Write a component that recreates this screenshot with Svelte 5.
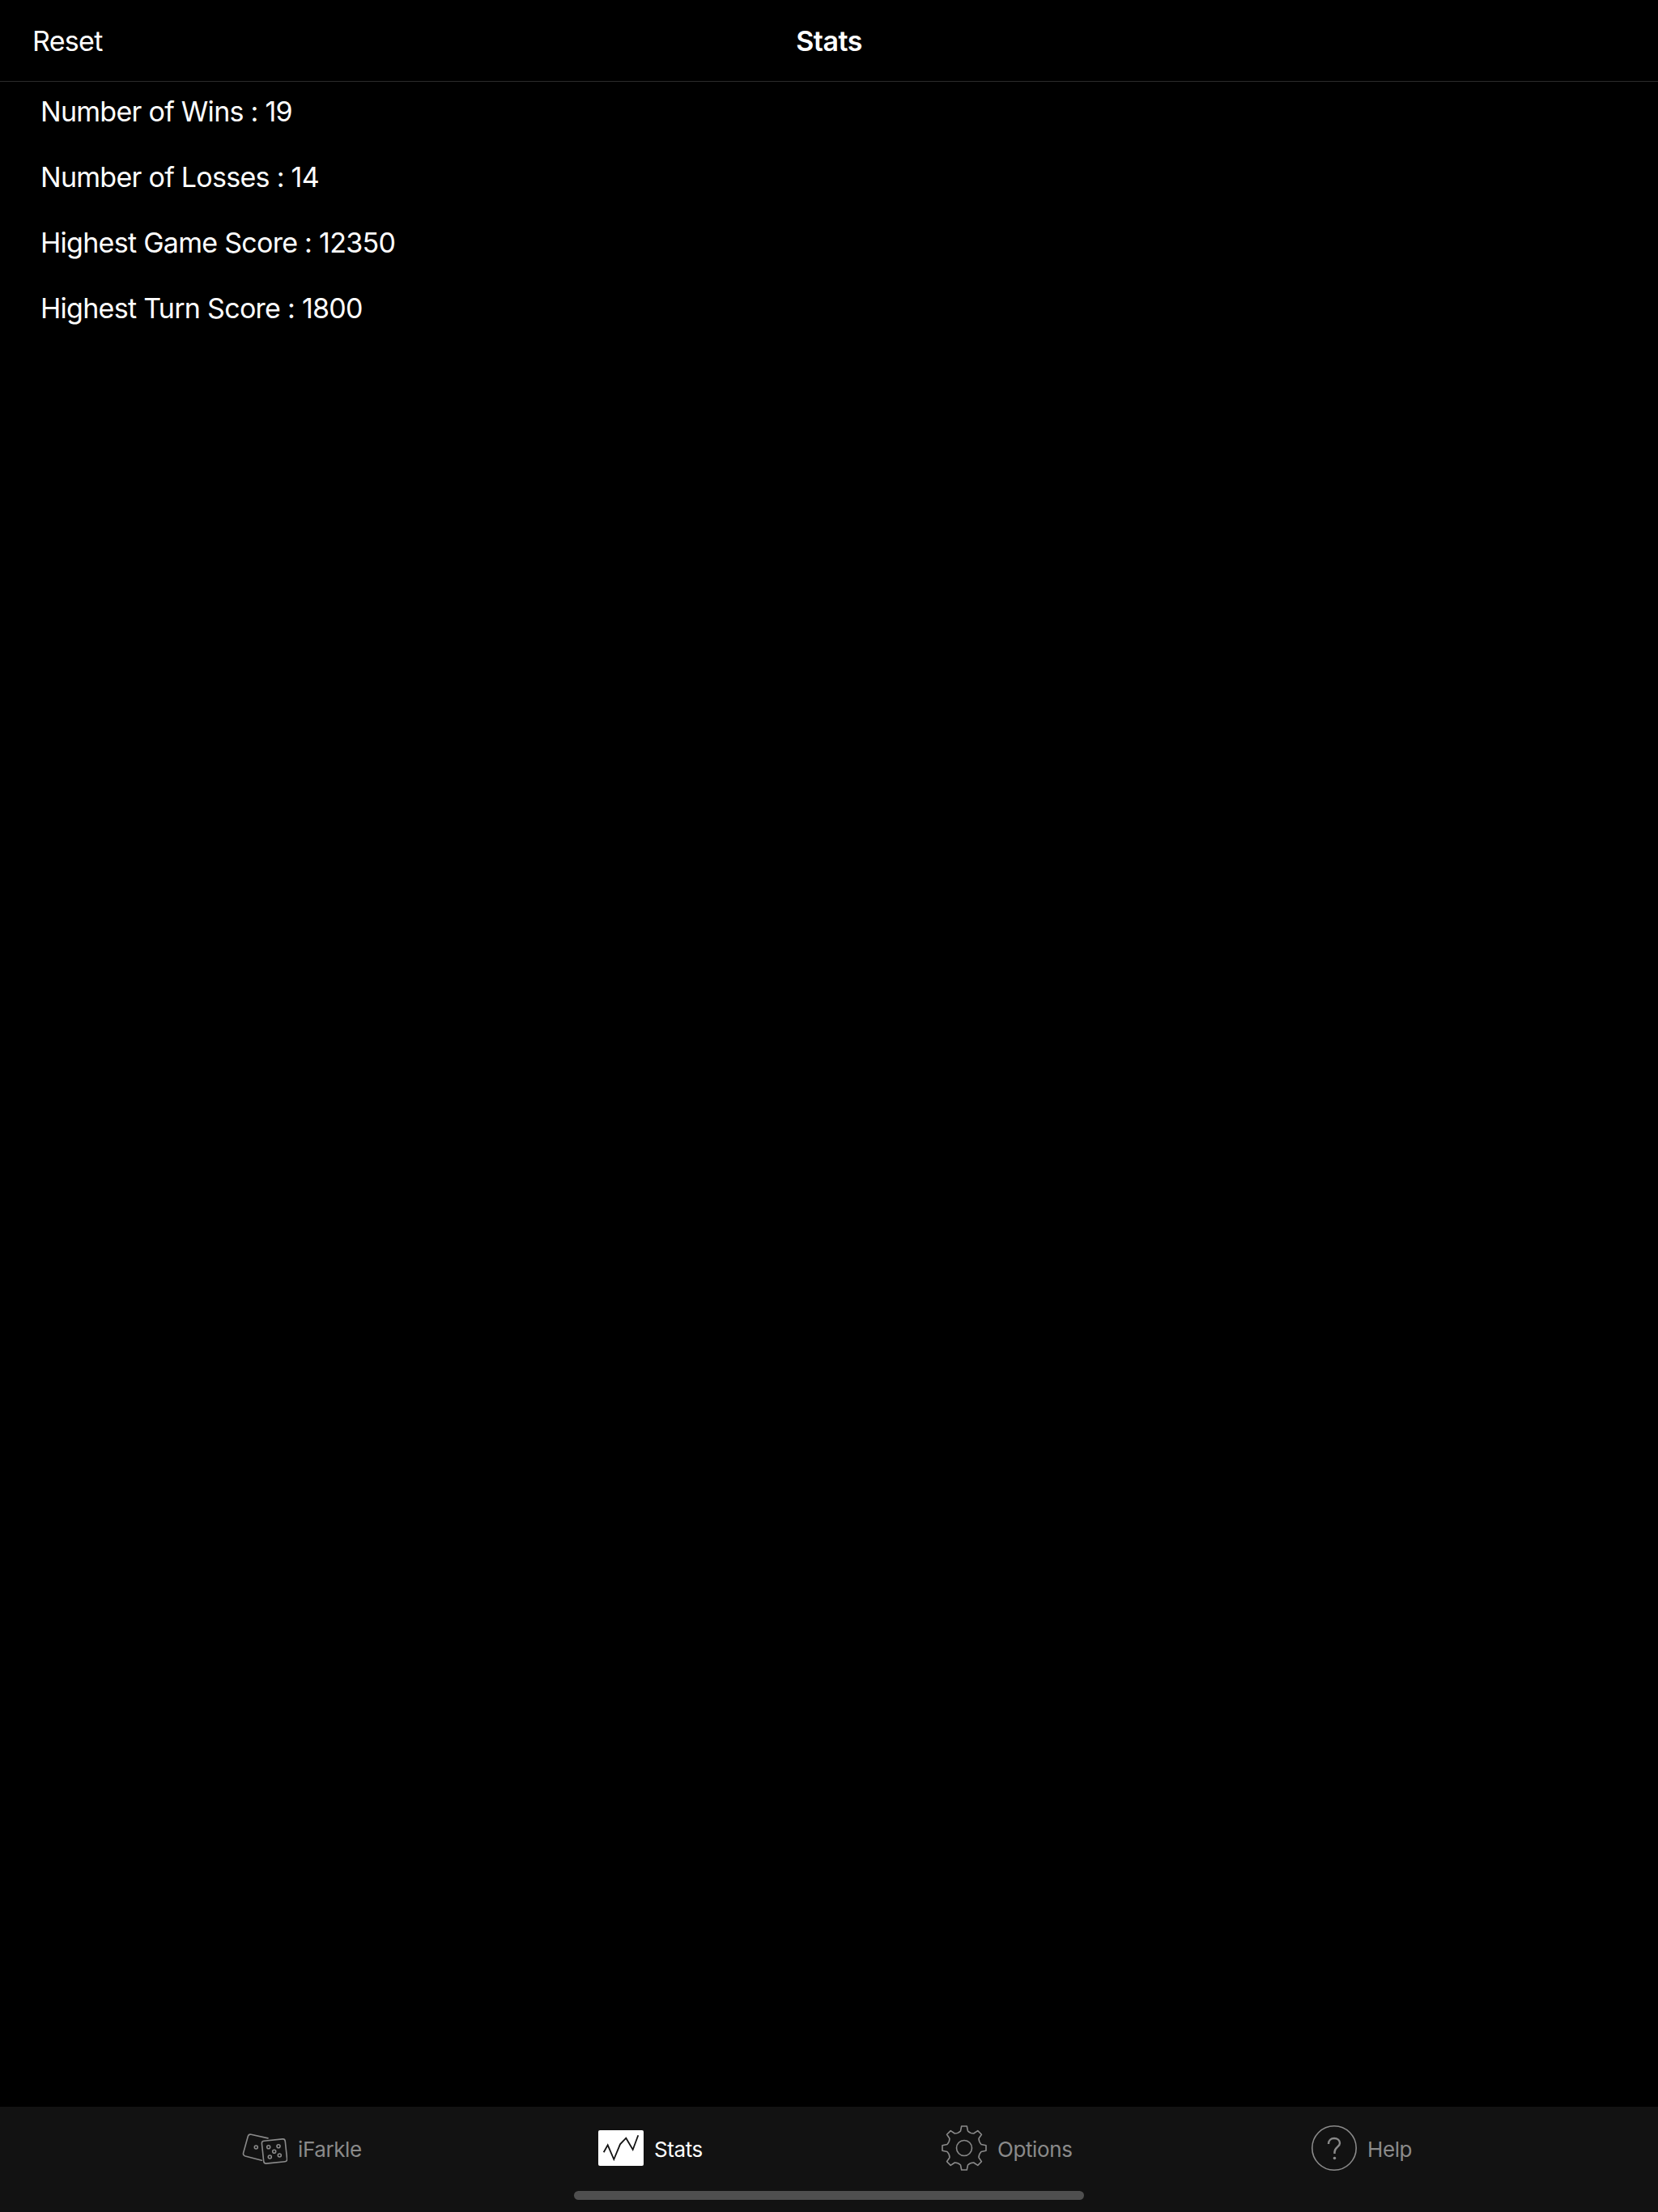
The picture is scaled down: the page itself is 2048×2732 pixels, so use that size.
<script>
	const stats = [
		{ label: 'Number of Wins', value: 19 },
		{ label: 'Number of Losses', value: 14 },
		{ label: 'Highest Game Score', value: 12350 },
		{ label: 'Highest Turn Score', value: 1800 }
	];

	// 8 teeth around the centre of a 56 box
	function gearPath() {
		const pt = (deg, r) => {
			const a = (deg * Math.PI) / 180;
			return `${(28 + r * Math.cos(a)).toFixed(2)} ${(28 + r * Math.sin(a)).toFixed(2)}`;
		};
		let d = '';
		for (let i = 0; i < 8; i++) {
			const a = i * 45 - 90;
			d += `${i === 0 ? 'M' : 'L'}${pt(a - 12, 21.5)} L${pt(a - 7, 27.2)} L${pt(a + 7, 27.2)} L${pt(a + 12, 21.5)} Q${pt(a + 22.5, 19.5)} ${pt(a + 33, 21.5)} `;
		}
		return d + 'Z';
	}
</script>

<div class="screen">
	<header class="nav">
		<button class="reset">Reset</button>
		<h1>Stats</h1>
	</header>

	<main class="list">
		{#each stats as s}
			<div class="row">{s.label} : {s.value}</div>
		{/each}
	</main>

	<nav class="tabs">
		<div class="tab">
			<svg width="56" height="56" viewBox="0 0 56 56" fill="none" stroke="currentColor" stroke-width="1.6">
				<path d="M24.3 43.3 L4 38 Q.9 37 1.6 34 L7.3 13.5 Q8.2 10.5 11.2 11.2 L32 15.9" stroke-linecap="round" />
				<rect x="25.5" y="18" width="29" height="28" rx="3" transform="rotate(-6 40 32)" />
				<circle cx="17.3" cy="27" r="2" />
				<circle cx="32.7" cy="26.7" r="2" />
				<circle cx="45" cy="25.7" r="2" />
				<circle cx="39.7" cy="32.3" r="2" />
				<circle cx="34.3" cy="39" r="2" />
				<circle cx="46.3" cy="37" r="2" />
			</svg>
			<span>iFarkle</span>
		</div>
		<div class="tab active">
			<svg width="56" height="56" viewBox="0 0 56 56" fill="none">
				<rect y="6" width="56" height="44" rx="2" fill="#fff" />
				<polyline points="6.7,33.3 11.7,24.3 19.3,42 27,23.3 34.3,15.7 42.7,30 49.3,12.3" stroke="#121212" stroke-width="1.8" />
			</svg>
			<span>Stats</span>
		</div>
		<div class="tab">
			<svg width="56" height="56" viewBox="0 0 56 56" fill="none" stroke="currentColor" stroke-width="1.6">
				<path d={gearPath()} stroke-linejoin="round" />
				<circle cx="28" cy="28" r="9.5" />
			</svg>
			<span>Options</span>
		</div>
		<div class="tab">
			<svg width="56" height="56" viewBox="0 0 56 56" fill="none" stroke="currentColor" stroke-width="1.6">
				<circle cx="28" cy="28" r="27.2" />
				<path d="M21 23 C21 18.5 24 16 28 16 C32 16 35 18.5 35 22 C35 26.5 28.5 27 28.5 33 V35" stroke-width="2.4" />
				<circle cx="28.5" cy="40.5" r="1.8" fill="currentColor" stroke="none" />
			</svg>
			<span>Help</span>
		</div>
		<div class="home"></div>
	</nav>
</div>

<style>
	:global(body) {
		margin: 0;
		background: #000;
	}

	.screen {
		height: 100vh;
		display: flex;
		flex-direction: column;
		background: #000;
		color: #fff;
		font-family: Inter, "Liberation Sans", sans-serif;
	}

	.nav {
		height: 100px;
		flex-shrink: 0;
		display: grid;
		grid-template-columns: 1fr auto 1fr;
		align-items: center;
		padding: 0 40px;
		border-bottom: 1px solid #2b2b2b;
	}

	.reset {
		justify-self: start;
		padding: 0;
		border: none;
		background: none;
		color: #fff;
		font: inherit;
		font-size: 34px;
		letter-spacing: -0.7px;
	}

	h1 {
		margin: 0;
		font-size: 34px;
		font-weight: 600;
		letter-spacing: -0.5px;
	}

	.list {
		flex: 1;
		display: flex;
		flex-direction: column;
		padding: 17px 50px 0;
	}

	.row {
		height: 81px;
		line-height: 40px;
		font-size: 34px;
		letter-spacing: -0.72px;
	}

	.tabs {
		position: relative;
		height: 130px;
		flex-shrink: 0;
		display: grid;
		grid-template-columns: 440px 424px 457px auto;
		padding: 23px 0 0 299px;
		box-sizing: border-box;
		background: #121212;
		color: #8a8a8a;
	}

	.tab {
		display: flex;
		align-items: center;
		align-self: start;
		gap: 13px;
		height: 56px;
		font-size: 26px;
		letter-spacing: -0.4px;
	}

	.tab span {
		padding-top: 2px;
	}

	.tab.active {
		color: #fff;
	}

	.home {
		position: absolute;
		left: 709px;
		bottom: 15px;
		width: 630px;
		height: 11px;
		border-radius: 6px;
		background: #4f4f4f;
	}
</style>
